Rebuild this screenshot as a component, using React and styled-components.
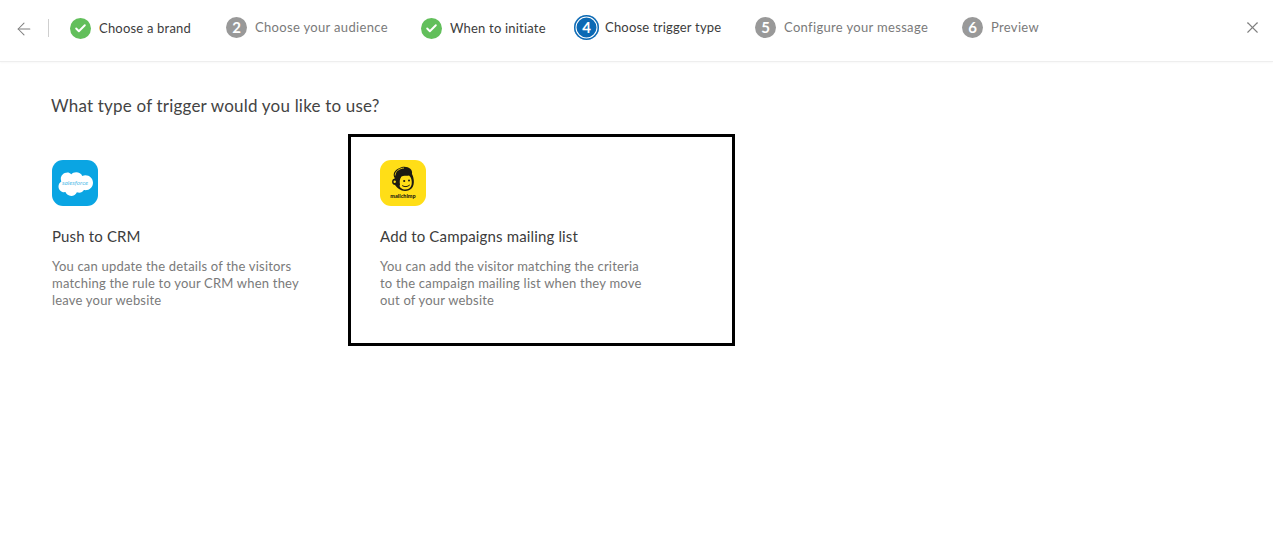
import styled, { createGlobalStyle } from "styled-components";
import { ArrowLeft, Check, X } from "lucide-react";

const GlobalStyle = createGlobalStyle`
  html, body {
    margin: 0;
    padding: 0;
    background: #fff;
    font-family: Lato, "Open Sans", sans-serif;
  }
`;

const Header = styled.header`
  display: flex;
  align-items: center;
  height: 62px;
  padding: 0 11px 7px 14px;
  box-sizing: border-box;
  background: #fff;
  border-bottom: 1px solid #eeeeee;
  box-shadow: 0 1px 2px rgba(0, 0, 0, 0.03);
`;

const IconButton = styled.button`
  display: flex;
  padding: 0;
  border: 0;
  background: none;
  color: #7f7f7f;
`;

const BackButton = styled(IconButton)`
  margin-top: 3px;
`;

const Divider = styled.div`
  width: 1px;
  height: 18px;
  margin: 2px 21px 0 14px;
  background: #cfcfcf;
`;

const Steps = styled.div`
  flex: 1;
  display: grid;
  grid-template-columns: 156px 195px 153px 181px 207px auto;
  align-items: center;
`;

const Step = styled.div`
  display: flex;
  align-items: center;
  gap: ${(p) => (p.$status === "active" ? "6px" : "8px")};
  margin-top: ${(p) => (p.$status === "done" ? "2px" : "0")};
`;

const circleColors = {
  done: "#62bf5b",
  active: "#0b69b4",
  pending: "#999999",
};

const Circle = styled.span`
  display: flex;
  align-items: center;
  justify-content: center;
  box-sizing: border-box;
  width: ${(p) => (p.$status === "active" ? "25px" : "21px")};
  height: ${(p) => (p.$status === "active" ? "25px" : "21px")};
  border-radius: 50%;
  background: ${(p) => circleColors[p.$status]};
  color: #fff;
  font-size: 15px;
  font-weight: 700;
  box-shadow: ${(p) =>
    p.$status === "active" ? "inset 0 0 0 1.5px #0b69b4, inset 0 0 0 2.5px #fff" : "none"};
`;

const StepLabel = styled.span`
  font-size: 13px;
  letter-spacing: ${(p) => (p.$status === "pending" ? "0.33px" : "0.2px")};
  white-space: nowrap;
  color: ${(p) => (p.$status === "pending" ? "#7a7a7a" : "#3c3c3c")};
`;

const Main = styled.main`
  padding: 33px 0 0 20px;
`;

const Title = styled.h1`
  margin: 0 0 17px 31px;
  font-size: 17px;
  line-height: 22px;
  font-weight: 400;
  letter-spacing: 0.2px;
  color: #444444;
`;

const Cards = styled.div`
  display: flex;
`;

const Card = styled.div`
  box-sizing: border-box;
  width: ${(p) => p.$width}px;
  height: 212px;
  padding: 23px 29px;
  border: 3px solid ${(p) => (p.$selected ? "#000" : "transparent")};
`;

const Logo = styled.div`
  width: 46px;
  height: 46px;
  border-radius: 11px;
  overflow: hidden;
  background: ${(p) => p.$color};

  svg {
    display: block;
  }
`;

const CardTitle = styled.h2`
  margin: 20px 0 0;
  font-size: 15px;
  line-height: 20px;
  font-weight: 400;
  letter-spacing: 0.15px;
  color: #3c3c3c;
`;

const CardText = styled.p`
  width: 268px;
  margin: 12px 0 0;
  font-size: 13px;
  line-height: 17px;
  letter-spacing: 0.2px;
  color: #7a7a7a;
`;

const SalesforceLogo = () => (
  <svg width="46" height="46" viewBox="0 0 46 46">
    <path
      fill="#fff"
      d="M19 14.5c1.4-1.4 3.2-2.2 5.2-2.2 2.7 0 5 1.4 6.1 3.6 1-.4 2-.7 3.1-.7 4.3 0 7.6 3.4 7.6 7.5s-3.3 7.5-7.6 7.5c-.5 0-1 0-1.5-.1-.9 1.6-2.7 2.7-4.7 2.7-.8 0-1.6-.2-2.3-.5-1 2.2-3.2 3.7-5.7 3.7-2.7 0-4.9-1.6-5.8-3.9-.4.1-.8.1-1.2.1-3.2 0-5.7-2.6-5.7-5.8 0-2.1 1.1-4 2.8-5-.4-.8-.5-1.7-.5-2.6 0-3.5 2.9-6.4 6.6-6.4 1.5 0 2.7.5 3.6 1.6z"
    />
    <text x="23" y="25" textAnchor="middle" fontSize="6.4" fontStyle="italic" fontFamily="Lato, sans-serif" fill="#56bce8">
      salesforce
    </text>
  </svg>
);

const MailchimpLogo = () => (
  <svg width="46" height="46" viewBox="0 0 46 46">
    <path
      fill="#1c1a12"
      d="M22 7C28 6 33 9 32 14C34 18 35 24 32 28C29 31.5 23 32 19 29C17 27.8 16 26.5 15 25C12.5 25 11.5 22 12.5 20C13 19 14 18.5 15 18.5C12.5 15 13 10 22 7Z"
    />
    <path
      fill="#ffde17"
      d="M21.5 16.5C24 15 27 16.5 29 15.5C31 17 32.5 21 31.5 25C30.5 29 26 30.5 22.5 29C20 28 19 26 20 24.5C19.5 22 19.5 19 21.5 16.5Z"
    />
    <circle cx="14.7" cy="21.8" r="1.2" fill="#ffde17" />
    <circle cx="24.2" cy="21" r="1.1" fill="#1c1a12" />
    <circle cx="29" cy="20.5" r="1" fill="#1c1a12" />
    <path fill="none" stroke="#1c1a12" strokeWidth="1" strokeLinecap="round" d="M22.5 25.8c2 1.3 5 1.2 7-.6" />
    <path fill="none" stroke="#ffde17" strokeWidth=".8" d="M15.2 15.5C15 11.5 19 8.5 24 8" />
    <text x="23" y="37.5" textAnchor="middle" fontSize="5.5" fontWeight="900" fontFamily="Lato, sans-serif" fill="#1c1a12">
      mailchimp
    </text>
  </svg>
);

const steps = [
  { status: "done", label: "Choose a brand" },
  { status: "pending", number: 2, label: "Choose your audience" },
  { status: "done", label: "When to initiate" },
  { status: "active", number: 4, label: "Choose trigger type" },
  { status: "pending", number: 5, label: "Configure your message" },
  { status: "pending", number: 6, label: "Preview" },
];

export default function App() {
  return (
    <>
      <GlobalStyle />
      <Header>
        <BackButton>
          <ArrowLeft size={20} strokeWidth={1.25} />
        </BackButton>
        <Divider />
        <Steps>
          {steps.map((step) => (
            <Step key={step.label} $status={step.status}>
              <Circle $status={step.status}>
                {step.status === "done" ? <Check size={13} strokeWidth={3.5} /> : step.number}
              </Circle>
              <StepLabel $status={step.status}>{step.label}</StepLabel>
            </Step>
          ))}
        </Steps>
        <IconButton>
          <X size={19} strokeWidth={1.4} />
        </IconButton>
      </Header>
      <Main>
        <Title>What type of trigger would you like to use?</Title>
        <Cards>
          <Card $width={328}>
            <Logo $color="#0aa5e3">
              <SalesforceLogo />
            </Logo>
            <CardTitle>Push to CRM</CardTitle>
            <CardText>
              You can update the details of the visitors matching the rule to your CRM when they leave your website
            </CardText>
          </Card>
          <Card $width={387} $selected>
            <Logo $color="#ffde17">
              <MailchimpLogo />
            </Logo>
            <CardTitle>Add to Campaigns mailing list</CardTitle>
            <CardText>
              You can add the visitor matching the criteria to the campaign mailing list when they move out of your website
            </CardText>
          </Card>
        </Cards>
      </Main>
    </>
  );
}
